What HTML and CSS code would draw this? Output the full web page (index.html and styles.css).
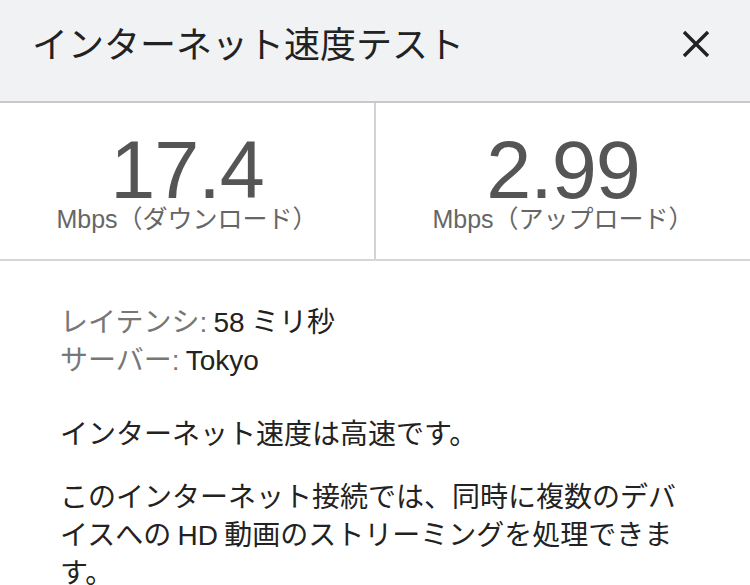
FILE: index.html
```html
<!DOCTYPE html>
<html lang="ja">
<head>
<meta charset="utf-8">
<title>インターネット速度テスト</title>
<link rel="stylesheet" href="styles.css">
</head>
<body>
<div class="panel">
  <header class="head">
    <h1 class="title">インターネット速度テスト</h1>
    <button class="close" aria-label="閉じる">
      <svg viewBox="0 0 28 28" width="28" height="28"><path d="M2 2 L26 26 M26 2 L2 26" stroke="#222" stroke-width="3.4" fill="none"/></svg>
    </button>
  </header>
  <section class="stats">
    <div class="stat">
      <div class="num">17.4</div>
      <div class="unit">Mbps（ダウンロード）</div>
    </div>
    <div class="stat stat-right">
      <div class="num">2.99</div>
      <div class="unit">Mbps（アップロード）</div>
    </div>
  </section>
  <section class="body">
    <div class="details">
      <div class="row"><span class="key">レイテンシ<span class="en">:</span></span> <span class="en">58</span> ミリ秒</div>
      <div class="row"><span class="key">サーバー<span class="en">:</span></span> <span class="en">Tokyo</span></div>
    </div>
    <p class="p1">インターネット速度は高速です。</p>
    <p class="p2">このインターネット接続では、同時に複数のデバイスへの <span class="en">HD</span> 動画のストリーミングを処理できます。</p>
  </section>
</div>
</body>
</html>
```
FILE: styles.css
```css
html, body {
  margin: 0;
  padding: 0;
  background: #ffffff;
}
body {
  width: 750px;
  height: 585px;
  overflow: hidden;
  font-family: "Noto Sans CJK JP", sans-serif;
  color: #222;
}
.panel {
  display: flex;
  flex-direction: column;
}
.head {
  height: 101px;
  background: #f1f2f4;
  border-bottom: 2px solid #c9c9cb;
  display: flex;
  align-items: flex-start;
  justify-content: space-between;
  padding: 0 40px 0 32px;
  box-sizing: content-box;
}
.title {
  margin: 20px 0 0 0;
  font-size: 36px;
  line-height: 44px;
  font-weight: 400;
  color: #222;
  font-family: "Noto Sans CJK JP", sans-serif;
}
.close {
  margin-top: 30px;
  padding: 0;
  border: 0;
  background: transparent;
  width: 28px;
  height: 28px;
  display: flex;
}
.stats {
  display: grid;
  grid-template-columns: 374px 1fr;
  height: 156px;
  border-bottom: 2px solid #d6d6d6;
}
.stat {
  display: flex;
  flex-direction: column;
  align-items: center;
  padding-top: 35px;
}
.stat-right {
  border-left: 2px solid #d3d3d3;
}
.num {
  font-family: "Liberation Sans", sans-serif;
  font-size: 81px;
  line-height: 64px;
  color: #555;
  letter-spacing: -1px;
}
.unit {
  font-family: "Liberation Sans", "Noto Sans CJK JP", sans-serif;
  font-size: 25px;
  line-height: 30px;
  color: #666;
  margin-top: 2px;
}
.body {
  padding: 40px 55px 0 60px;
  font-size: 28px;
  line-height: 38px;
}
.details {
  margin: 0;
}
.row {
  color: #222;
}
.key {
  color: #777;
}
.en {
  font-family: "Liberation Sans", sans-serif;
  line-height: 1;
}
.p1 {
  margin: 36px 0 0 0;
}
.p2 {
  margin: 25px 0 0 0;
}
```
